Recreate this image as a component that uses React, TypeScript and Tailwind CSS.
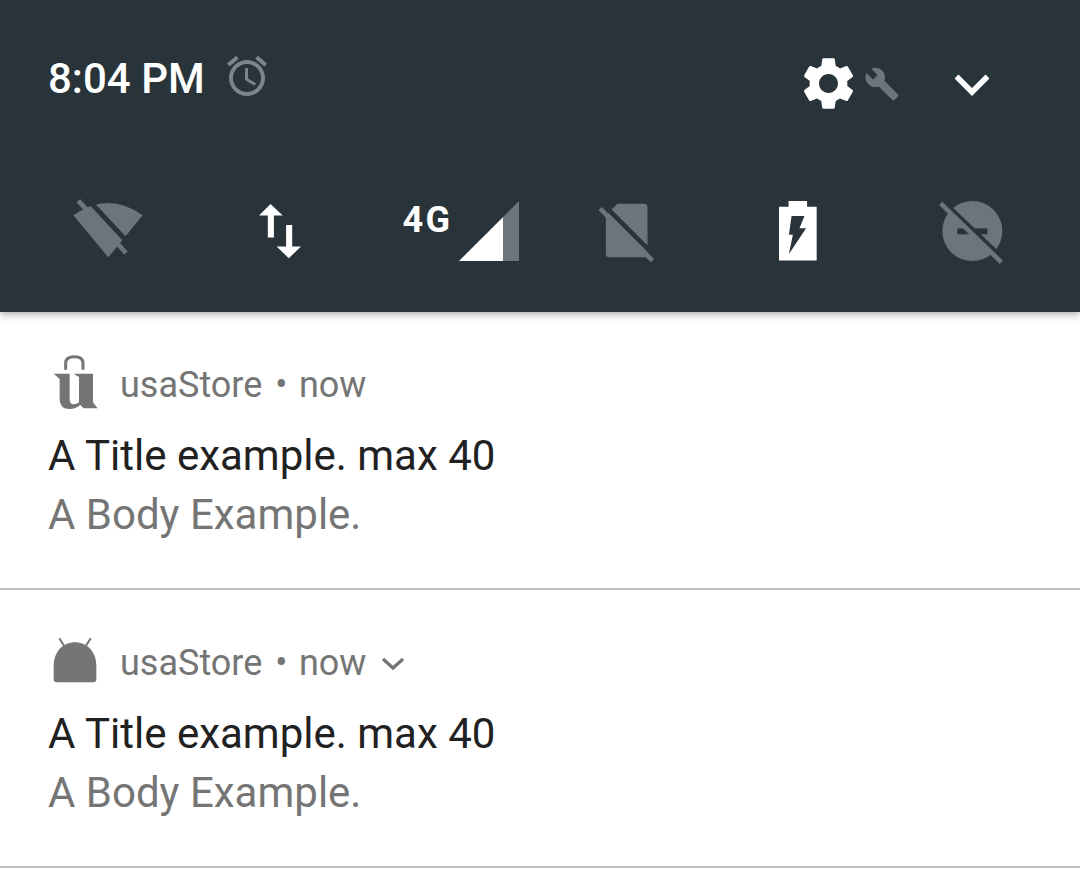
import React from "react";

const GRAY = "#6b767b";
const BG = "#29333a";

const WifiOff = () => (
  <svg viewBox="66 40 216 180" width={72} height={60} className="block">
    <path d="M70 92Q175 18 278 92L175 218Z" fill={GRAY} />
    <path d="M104 34L249 190" stroke={BG} strokeWidth={15} />
    <path d="M85 48L228 205" stroke={GRAY} strokeWidth={14} />
  </svg>
);

const Arrows = () => (
  <svg viewBox="625 55 130 165" width={44} height={56} className="mt-[5px] ml-[-2px] block">
    <path d="M662 58L698 92H672V157H654V92H628Z" fill="#fff" />
    <path d="M708 120H726V183H752L716 218L680 183H708Z" fill="#fff" />
  </svg>
);

const Signal = () => (
  <div className="flex items-start gap-[6px] mt-[3px] ml-[14px]">
    <span className="text-[36px] leading-[40px] font-bold text-white tracking-[2.5px] mt-[-1px]">4G</span>
    <svg viewBox="207 48 180 180" width={60} height={60} className="block">
      <path d="M207 228L340 95V228Z" fill="#fff" />
      <path d="M340 95L387 48V228H340Z" fill={GRAY} />
    </svg>
  </div>
);

const SimOff = () => (
  <svg viewBox="622 55 170 180" width={57} height={60} className="mt-[5px] block">
    <path d="M680 57H760Q770 57 770 67V218H655Q645 218 645 208V92Z" fill={GRAY} />
    <path d="M640 62L785 207" stroke={BG} strokeWidth={14} />
    <path d="M628 72L785 228" stroke={GRAY} strokeWidth={14} />
  </svg>
);

const Battery = () => (
  <svg viewBox="58 48 115 181" width={38} height={60} className="mt-[3px] ml-[-4px] block">
    <path d="M87 48H143V65H172V228H58V65H87Z" fill="#fff" />
    <path d="M96 93H135L120 130H140L88 208L100 150H88Z" fill={BG} />
  </svg>
);

const DndOff = () => (
  <svg viewBox="535 45 195 195" width={65} height={65} className="mt-[2px] ml-[-2px] block">
    <circle cx={635} cy={138} r={90} fill={GRAY} />
    <path d="M590 130H680V148H590Z" fill={BG} />
    <path d="M548 50L728 222" stroke={BG} strokeWidth={14} />
    <path d="M540 55L722 232" stroke={GRAY} strokeWidth={14} />
  </svg>
);

const UsaLogo = () => (
  <svg viewBox="38 28 135 165" width={45} height={55} className="block ml-[5px] mt-[-5px]">
    <path d="M76 72V52Q76 33 102 33Q128 33 128 52V72" fill="none" stroke="#757575" strokeWidth={9} />
    <path
      d="M40 84H88V160Q88 176 100 176Q108 176 116 170V94L100 84H158V170L172 188H130L120 178Q106 190 88 190Q58 190 58 160V100Z"
      fill="#757575"
    />
  </svg>
);

const AndroidLogo = () => (
  <svg viewBox="38 34 132 138" width={44} height={46} className="block ml-[5px] mt-[-6px]">
    <path d="M40 160V122C40 76 70 50 104 50C138 50 168 76 168 122V160Q168 170 158 170H50Q40 170 40 160Z" fill="#757575" />
    <path d="M57 38L71 60M151 38L137 60" stroke="#757575" strokeWidth={6} />
  </svg>
);

function Notification({ icon, chevron }: { icon: React.ReactNode; chevron?: boolean }) {
  return (
    <div className="h-[278px] border-b-2 border-[#bdbdbd] pl-[48px] pt-[41px]">
      <div className="flex items-center h-[64px]">
        <div className="w-[72px] flex items-center">{icon}</div>
        <span className="text-[36px] text-[#757575]">usaStore</span>
        <span className="text-[36px] text-[#757575] ml-[13px]">•</span>
        <span className="text-[36px] text-[#757575] ml-[11.5px]">now</span>
        {chevron && (
          <svg viewBox="0 0 24 14" width={24} height={14} className="ml-[15px] mt-[1px]">
            <path d="M2 2L12 11L22 2" fill="none" stroke="#757575" strokeWidth={3.2} />
          </svg>
        )}
      </div>
      <div className="text-[42px] leading-[59px] text-[#212121] mt-[9px]">A Title example. max 40</div>
      <div className="text-[42px] leading-[59px] text-[#757575]">A Body Example.</div>
    </div>
  );
}

export default function App() {
  return (
    <div className="w-[1080px] h-[870px] bg-white overflow-hidden font-['Roboto',sans-serif]">
      <div className="relative h-[312px] bg-[#29333a] shadow-[0_2px_8px_rgba(0,0,0,0.35)]">
        <div className="flex items-center h-[156px] pl-[48px]">
          <span className="text-[42px] font-medium text-white">8:04 PM</span>
          <svg viewBox="0 0 24 24" width={48} height={48} fill="#7b868b" className="ml-[18px] mt-[-4px]">
            <path d="M22 5.72l-4.6-3.86-1.29 1.53 4.6 3.86L22 5.72zM7.88 3.39L6.6 1.86 2 5.71l1.29 1.53 4.59-3.85zM12.5 8H11v6l4.75 2.85.75-1.23-4-2.37V8zM12 4c-4.97 0-9 4.03-9 9s4.03 9 9 9c4.97 0 9-4.03 9-9s-4.03-9-9-9zm0 16c-3.87 0-7-3.13-7-7s3.13-7 7-7 7 3.13 7 7-3.13 7-7 7z" />
          </svg>
          <svg viewBox="0 0 24 24" width={63} height={63} fill="#fff" className="ml-auto mt-[10px]">
            <path d="M19.14 12.94c.04-.3.06-.61.06-.94 0-.32-.02-.64-.07-.94l2.03-1.58c.18-.14.23-.41.12-.61l-1.92-3.32c-.12-.22-.37-.29-.59-.22l-2.39.96c-.5-.38-1.03-.7-1.62-.94l-.36-2.54c-.04-.24-.24-.41-.48-.41h-3.84c-.24 0-.43.17-.47.41l-.36 2.54c-.59.24-1.13.57-1.62.94l-2.39-.96c-.22-.08-.47 0-.59.22L2.74 8.87c-.12.21-.08.47.12.61l2.03 1.58c-.05.3-.09.63-.09.94s.02.64.07.94l-2.03 1.58c-.18.14-.23.41-.12.61l1.92 3.32c.12.22.37.29.59.22l2.39-.96c.5.38 1.03.7 1.62.94l.36 2.54c.05.24.24.41.48.41h3.84c.24 0 .44-.17.47-.41l.36-2.54c.59-.24 1.13-.56 1.62-.94l2.39.96c.22.08.47 0 .59-.22l1.92-3.32c.12-.22.07-.47-.12-.61l-2.01-1.58zM12 15.6c-1.98 0-3.6-1.62-3.6-3.6s1.62-3.6 3.6-3.6 3.6 1.62 3.6 3.6-1.62 3.6-3.6 3.6z" />
          </svg>
          <svg viewBox="0 0 24 24" width={36} height={36} fill={GRAY} className="ml-[4px] mt-[12px]">
            <path d="M22.7 19l-9.1-9.1c.9-2.3.4-5-1.5-6.9-2-2-5-2.4-7.4-1.3L9 6 6 9 1.6 4.7C.4 7.1.9 10.1 2.9 12.1c1.9 1.9 4.6 2.4 6.9 1.5l9.1 9.1c.4.4 1 .4 1.4 0l2.3-2.3c.5-.4.5-1.1.1-1.4z" />
          </svg>
          <svg viewBox="0 0 36 24" width={36} height={24} className="ml-[54px] mr-[90px] mt-[12px]">
            <path d="M2.5 4.5L18 20L33.5 4.5" fill="none" stroke="#fff" strokeWidth={5.5} />
          </svg>
        </div>
        <div className="grid grid-cols-6 px-[21px] pt-[42px]">
          <div className="flex justify-center"><WifiOff /></div>
          <div className="flex justify-center"><Arrows /></div>
          <div className="flex justify-center"><Signal /></div>
          <div className="flex justify-center"><SimOff /></div>
          <div className="flex justify-center"><Battery /></div>
          <div className="flex justify-center"><DndOff /></div>
        </div>
      </div>
      <Notification icon={<UsaLogo />} />
      <Notification icon={<AndroidLogo />} chevron />
    </div>
  );
}
